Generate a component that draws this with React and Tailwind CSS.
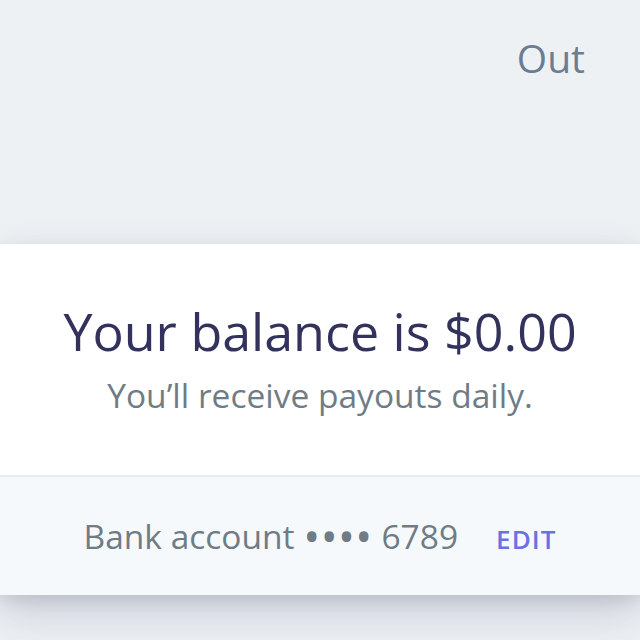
export default function App() {
	return (
		<div
			className="w-[640px] h-[640px] overflow-hidden bg-[#edf1f4] flex flex-col"
			style={{ fontFamily: '"Open Sans", "Noto Sans", sans-serif' }}
		>
			<div className="h-[244px] shrink-0 flex justify-end pr-[55px] pt-[34px]">
				<span className="text-[39px] leading-[48px] text-[#6b7c93]">Out</span>
			</div>

			<div className="shrink-0 bg-white shadow-[0_18px_40px_rgba(50,50,93,0.18),0_6px_16px_rgba(0,0,0,0.1)]">
				<div className="h-[231px] flex flex-col items-center pt-[55px]">
					<h1 className="text-[52px] leading-[64px] text-[#32325d] font-normal">
						Your balance is $0.00
					</h1>
					<p className="mt-[12px] text-[33.5px] leading-[40px] text-[#6f7c85]">
						You’ll receive payouts daily.
					</p>
				</div>
				<div className="h-[120px] border-t-2 border-[#e6ebf1] bg-[#f6f9fc] flex items-center justify-center pb-[8px]">
					<div className="flex items-baseline gap-[38px]">
						<span className="text-[33.5px] leading-[40px] text-[#6f7c85]">
							Bank account{" "}
							<span className="relative top-[4px] text-[45px] leading-none tracking-[0.01em]">••••</span>{" "}
							6789
						</span>
						<button className="text-[26px] leading-[32px] font-semibold tracking-[0.04em] text-[#6772e5]">
							EDIT
						</button>
					</div>
				</div>
			</div>
		</div>
	);
}
